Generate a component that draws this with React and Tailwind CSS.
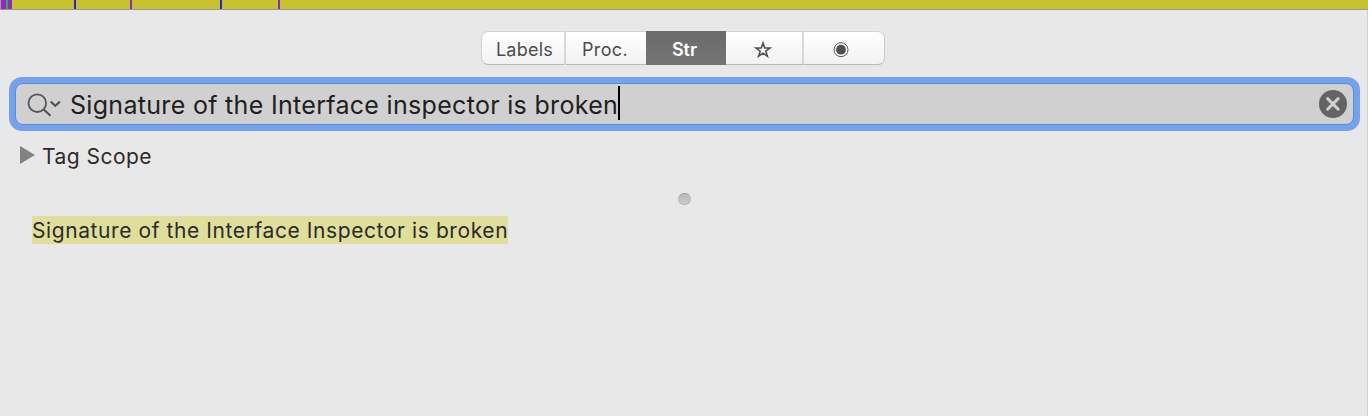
const stripes = [
  'w-px bg-[#a0a0a0]',
  'w-[5px] bg-[#9326c4]',
  'w-[2px] bg-[#26b53a]',
  'w-[4px] bg-[#9326c4]',
  'w-[62px]',
  'w-[2px] bg-[#321ed2]',
  'w-[54px]',
  'w-[2px] bg-[#9326c4]',
  'w-[88px]',
  'w-[2px] bg-[#321ed2]',
  'w-[56px]',
  'w-[2px] bg-[#9326c4]',
];

function Minimap() {
  return (
    <div className="flex h-[10px] w-full border-b border-[#999999] bg-[#c8c22e]">
      {stripes.map((c, i) => (
        <div key={i} className={`h-full shrink-0 ${c}`} />
      ))}
    </div>
  );
}

function Segments() {
  const cell = 'flex items-center justify-center h-full border-y border-t-[#d2d2d2] border-b-[#bababa] bg-linear-to-b from-white to-[#f2f2f2]';
  return (
    <div className="ml-[481px] mt-[21px] flex h-[34px] w-[404px] text-[18px] leading-none text-[#4c4c4c]">
      <button className={`${cell} w-[85px] rounded-l-[7px] border-l border-l-[#d0d0d0] border-r-2 border-r-[#d8d8d8] pt-[3px] pl-[3px] tracking-[0.25px]`}>Labels</button>
      <button className={`${cell} w-[80px] pt-[3px] pr-[2px] tracking-[0.4px]`}>Proc.</button>
      <button className="flex h-full w-[80px] items-center justify-center bg-linear-to-b from-[#6b6b6b] to-[#747474] pt-[3px] pr-[3px] font-semibold text-white">Str</button>
      <button className={`${cell} w-[78px] border-r-2 border-r-[#d8d8d8] pt-[3px] pr-[2px]`}>
        <svg width="18" height="18" viewBox="0 0 18 18" fill="none" stroke="#505050" strokeWidth="1.6">
          <path d="M9 2.1 10.75 7H16L11.8 10.2 13.4 15.3 9 12.2 4.6 15.3 6.2 10.2 2 7H7.25Z" />
        </svg>
      </button>
      <button className={`${cell} w-[81px] rounded-r-[7px] border-r border-r-[#cccccc] pr-[7px] pt-[3px]`}>
        <svg width="16" height="16" viewBox="0 0 16 16">
          <circle cx="8" cy="7.7" r="7" fill="none" stroke="#565656" strokeWidth="1" />
          <circle cx="8" cy="7.7" r="4.9" fill="#505050" />
        </svg>
      </button>
    </div>
  );
}

function SearchField() {
  return (
    <div className="ml-[9px] mt-[12px] h-[54px] w-[1351px] rounded-[13px] bg-[#75a2ed] p-[6px]">
      <div className="flex h-[42px] items-center rounded-[8px] border border-[#5a8cdc] bg-[#d0d0d0]">
        <svg className="ml-[10px] shrink-0" width="36" height="26" viewBox="0 0 36 26" fill="none" stroke="#555" strokeWidth="1.8">
          <circle cx="11.3" cy="12.2" r="8.8" />
          <path d="M17.7 18.4 24.5 24.8" strokeWidth="2.1" />
          <path d="M24.7 10.6 29.3 14.8 33.9 10.6" strokeWidth="2.1" />
        </svg>
        <span className="ml-[8px] w-[548px] whitespace-nowrap pt-[2px] text-[25px] leading-[34px] tracking-[0.31px] text-[#202020]">
          Signature of the Interface inspector is broken
        </span>
        <span className="mb-[3px] h-[34px] w-[2px] shrink-0 bg-black" />
        <svg className="ml-auto mr-[6px] shrink-0" width="28" height="28" viewBox="0 0 28 28">
          <circle cx="14" cy="14" r="14" fill="#646464" />
          <path d="M8.6 8.6 19.2 19.2M19.2 8.6 8.6 19.2" stroke="#d0d0d0" strokeWidth="3" strokeLinecap="round" />
        </svg>
      </div>
    </div>
  );
}

export default function App() {
  return (
    <div className="h-[416px] w-[1368px] overflow-hidden bg-[#e8e8e8] font-['Inter',sans-serif]">
      <Minimap />
      <div className="flex h-[406px] flex-col border-r border-[#cfcfcf]">
        <Segments />
        <SearchField />
        <div className="ml-[20px] mt-[10px] flex h-[32px] items-center">
          <svg className="mb-[4px]" width="15" height="18" viewBox="0 0 15 18">
            <path d="M0 0 15 9 0 18Z" fill="#828282" />
          </svg>
          <span className="ml-[7px] text-[21px] leading-[32px] tracking-[0.48px] text-[#2b2b2b]">Tag Scope</span>
        </div>
        <div className="ml-[678px] mt-[20px] h-[12px] w-[13px] rounded-full border border-[#b9b9b9] border-t-[#a0a0a0] bg-linear-to-b from-[#b8b8b8] to-[#cacaca]" />
        <div className="ml-[32px] mt-[11px] h-[28px] w-[476px] whitespace-nowrap bg-[#dfdf9b] text-[21px] leading-[29px] tracking-[0.59px] text-[#2b2b2b]">
          Signature of the Interface Inspector is broken
        </div>
      </div>
    </div>
  );
}
